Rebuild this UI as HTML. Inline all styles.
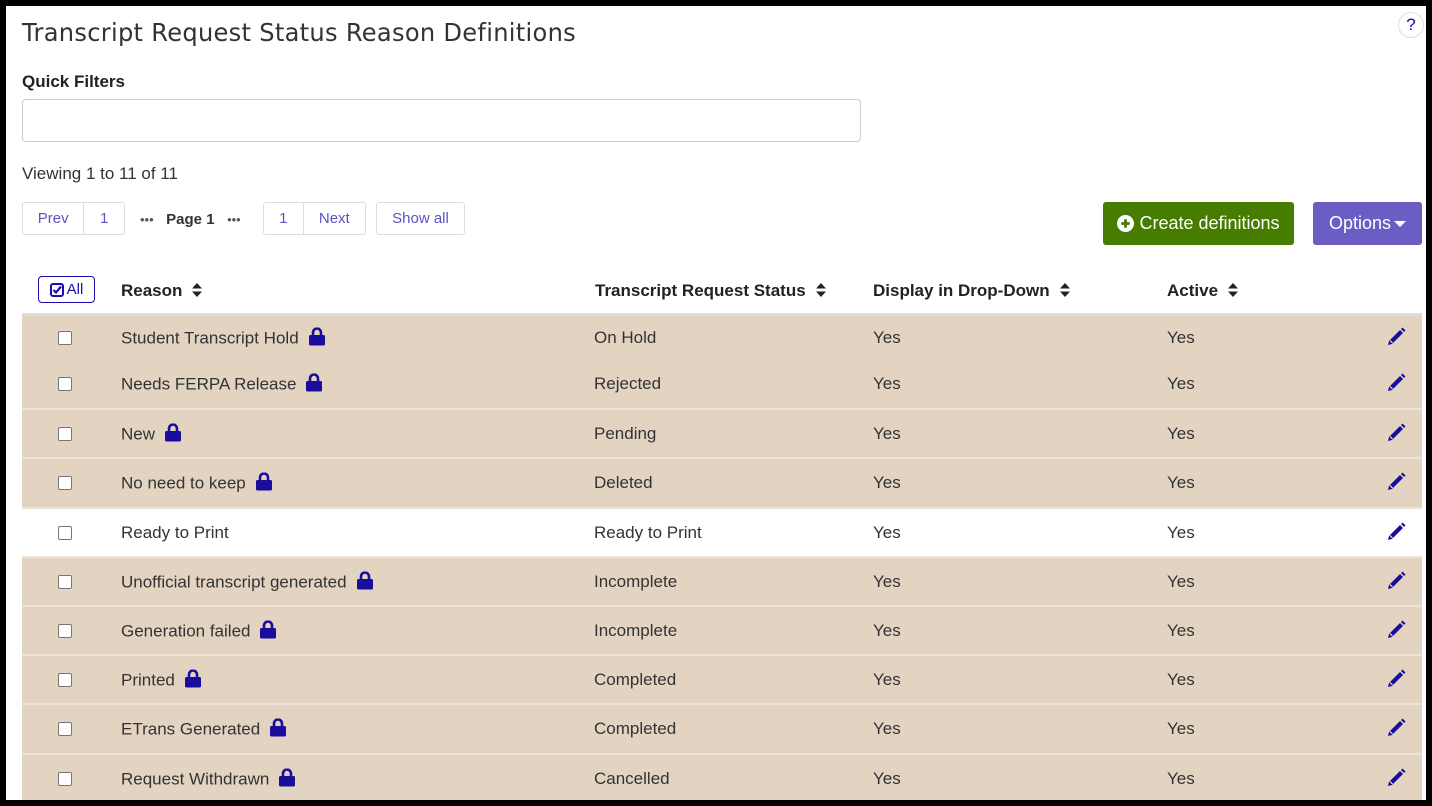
<!DOCTYPE html>
<html><head><style>
*{box-sizing:border-box;margin:0;padding:0}
body{width:1432px;height:806px;background:#000;font-family:"Liberation Sans",Arial,sans-serif;color:#333;overflow:hidden;position:relative}
.page{position:absolute;left:6px;top:6px;width:1420px;height:794px;background:#fff;overflow:hidden}
.abs{position:absolute}
h1{position:absolute;left:16px;top:12px;color:#333;letter-spacing:0.3px;font-family:"DejaVu Sans","Liberation Sans",sans-serif;font-weight:normal;transform:scaleX(0.965);transform-origin:left;font-size:25px}
.lbl{left:16px;top:66px;font-weight:bold;font-size:17px;color:#222}
.inp{left:16px;top:93px;width:839px;height:43px;border:1px solid #ccc;border-radius:4px}
.view{left:16px;top:158px;font-size:17px;color:#333}
.pg{top:196px;height:33px;border:1px solid #ddd;border-radius:3px;display:flex;font-size:15px;color:#5a55c0}
.pg span{display:flex;align-items:center;justify-content:center;height:100%}
.btn{top:196px;height:43px;border-radius:3px;color:#fff;font-size:18px;display:flex;align-items:center;justify-content:center}
.th{top:275px;font-weight:bold;font-size:17px;color:#222}
.sort{display:inline-block;margin-left:10px;vertical-align:-1px}
.row{position:absolute;left:16px;width:1400px;background:#e3d4c2;border-top:2px solid #ece4da}
.row.w{background:#fff}
.c{position:absolute;top:50%;transform:translateY(-50%);font-size:17px;color:#333;white-space:nowrap}
.cb{position:absolute;left:36px;top:50%;margin-top:-7px;width:14px;height:14px;border:1px solid #767676;border-radius:2px;background:#fff}
.lock{display:inline-block;vertical-align:-2px;margin-left:10px}
.pen{position:absolute;left:1364px;top:50%;margin-top:-11px}
</style></head><body><div class="page">
<h1>Transcript Request Status Reason Definitions</h1>
<div class="abs" style="right:2px;top:6px;width:26px;height:26px;border:1px solid #ddd;border-radius:50%;color:#1a0dab;font-size:17px;text-align:center;line-height:24px">?</div>
<div class="abs lbl">Quick Filters</div>
<div class="abs inp"></div>
<div class="abs view">Viewing 1 to 11 of 11</div>
<div class="abs pg" style="left:16px;width:103px"><span style="width:62px;border-right:1px solid #ddd">Prev</span><span style="width:40px">1</span></div>
<div class="abs" style="left:134px;top:205px;font-size:15px;color:#333"><span style="color:#555;font-size:13px">•••</span>&nbsp;&nbsp; <b>Page 1</b> &nbsp;&nbsp;<span style="color:#555;font-size:13px">•••</span></div>
<div class="abs pg" style="left:257px;width:103px"><span style="width:40px;border-right:1px solid #ddd">1</span><span style="width:62px">Next</span></div>
<div class="abs pg" style="left:370px;width:89px"><span style="width:100%">Show all</span></div>
<div class="abs btn" style="left:1097px;width:191px;background:#467c00"><svg width="17" height="17" viewBox="0 0 16 16" style="margin-right:5px"><circle cx="8" cy="8" r="8" fill="#fff"/><path d="M8 4v8M4 8h8" stroke="#467c00" stroke-width="2.6"/></svg>Create definitions</div>
<div class="abs btn" style="left:1307px;width:109px;background:#6a5ec4">Options<svg width="12" height="8" viewBox="0 0 12 8" style="margin-left:3px"><path d="M0 1h12L6 7z" fill="#fff"/></svg></div>

<div class="abs" style="left:32px;top:270px;width:57px;height:27px;border:1px solid #1a0dab;border-radius:4px;color:#1a0dab;font-size:15px;display:flex;align-items:center;justify-content:center"><svg width="14" height="14" viewBox="0 0 14 14" style="margin-right:3px"><rect x="1" y="1" width="12" height="12" rx="2" fill="none" stroke="#1a0dab" stroke-width="2"/><path d="M3.5 7l2.5 2.5 5-6" fill="none" stroke="#1a0dab" stroke-width="2.2"/></svg>All</div>
<svg width="0" height="0" style="position:absolute"><defs><symbol id="s" viewBox="0 0 10 14"><path d="M5 0l5 5.5H0zM5 14l5-5.5H0z" fill="#222"/></symbol><symbol id="l" viewBox="0 0 16 18"><path d="M4 8V5a4 4 0 0 1 8 0v3" fill="none" stroke="#1a0d9b" stroke-width="2.6"/><rect x="0" y="7.5" width="16" height="10.5" rx="1.5" fill="#1a0d9b"/></symbol><symbol id="p" viewBox="0 0 20 20"><path d="M2 18l1-4L14 3l3 3L6 17z" fill="#1a0d9b"/><path d="M15 2l1.5-1.5 3 3L18 5z" fill="#1a0d9b"/><path d="M4 13.5l2.5 2.5" stroke="#fff" stroke-width="1"/></symbol></defs></svg>
<div class="abs th" style="left:115px">Reason<svg class="sort" width="10" height="14"><use href="#s"/></svg></div>
<div class="abs th" style="left:589px">Transcript Request Status<svg class="sort" width="10" height="14"><use href="#s"/></svg></div>
<div class="abs th" style="left:867px">Display in Drop-Down<svg class="sort" width="10" height="14"><use href="#s"/></svg></div>
<div class="abs th" style="left:1161px">Active<svg class="sort" width="10" height="14"><use href="#s"/></svg></div>

<div class="row" style="top:307px;height:47px;border-top:3px solid #ddd"><div class="cb"></div><div class="c" style="left:99px">Student Transcript Hold<svg class="lock" width="16" height="18"><use href="#l"/></svg></div><div class="c" style="left:572px">On Hold</div><div class="c" style="left:851px">Yes</div><div class="c" style="left:1145px">Yes</div><svg class="pen" width="20" height="20"><use href="#p"/></svg></div>
<div class="row" style="top:354px;height:48px;border-top:none"><div class="cb"></div><div class="c" style="left:99px">Needs FERPA Release<svg class="lock" width="16" height="18"><use href="#l"/></svg></div><div class="c" style="left:572px">Rejected</div><div class="c" style="left:851px">Yes</div><div class="c" style="left:1145px">Yes</div><svg class="pen" width="20" height="20"><use href="#p"/></svg></div>
<div class="row" style="top:402px;height:49px"><div class="cb"></div><div class="c" style="left:99px">New<svg class="lock" width="16" height="18"><use href="#l"/></svg></div><div class="c" style="left:572px">Pending</div><div class="c" style="left:851px">Yes</div><div class="c" style="left:1145px">Yes</div><svg class="pen" width="20" height="20"><use href="#p"/></svg></div>
<div class="row" style="top:451px;height:50px"><div class="cb"></div><div class="c" style="left:99px">No need to keep<svg class="lock" width="16" height="18"><use href="#l"/></svg></div><div class="c" style="left:572px">Deleted</div><div class="c" style="left:851px">Yes</div><div class="c" style="left:1145px">Yes</div><svg class="pen" width="20" height="20"><use href="#p"/></svg></div>
<div class="row w" style="top:501px;height:49px"><div class="cb"></div><div class="c" style="left:99px">Ready to Print</div><div class="c" style="left:572px">Ready to Print</div><div class="c" style="left:851px">Yes</div><div class="c" style="left:1145px">Yes</div><svg class="pen" width="20" height="20"><use href="#p"/></svg></div>
<div class="row" style="top:550px;height:49px"><div class="cb"></div><div class="c" style="left:99px">Unofficial transcript generated<svg class="lock" width="16" height="18"><use href="#l"/></svg></div><div class="c" style="left:572px">Incomplete</div><div class="c" style="left:851px">Yes</div><div class="c" style="left:1145px">Yes</div><svg class="pen" width="20" height="20"><use href="#p"/></svg></div>
<div class="row" style="top:599px;height:49px"><div class="cb"></div><div class="c" style="left:99px">Generation failed<svg class="lock" width="16" height="18"><use href="#l"/></svg></div><div class="c" style="left:572px">Incomplete</div><div class="c" style="left:851px">Yes</div><div class="c" style="left:1145px">Yes</div><svg class="pen" width="20" height="20"><use href="#p"/></svg></div>
<div class="row" style="top:648px;height:49px"><div class="cb"></div><div class="c" style="left:99px">Printed<svg class="lock" width="16" height="18"><use href="#l"/></svg></div><div class="c" style="left:572px">Completed</div><div class="c" style="left:851px">Yes</div><div class="c" style="left:1145px">Yes</div><svg class="pen" width="20" height="20"><use href="#p"/></svg></div>
<div class="row" style="top:697px;height:50px"><div class="cb"></div><div class="c" style="left:99px">ETrans Generated<svg class="lock" width="16" height="18"><use href="#l"/></svg></div><div class="c" style="left:572px">Completed</div><div class="c" style="left:851px">Yes</div><div class="c" style="left:1145px">Yes</div><svg class="pen" width="20" height="20"><use href="#p"/></svg></div>
<div class="row" style="top:747px;height:49px"><div class="cb"></div><div class="c" style="left:99px">Request Withdrawn<svg class="lock" width="16" height="18"><use href="#l"/></svg></div><div class="c" style="left:572px">Cancelled</div><div class="c" style="left:851px">Yes</div><div class="c" style="left:1145px">Yes</div><svg class="pen" width="20" height="20"><use href="#p"/></svg></div>
</div></body></html>
